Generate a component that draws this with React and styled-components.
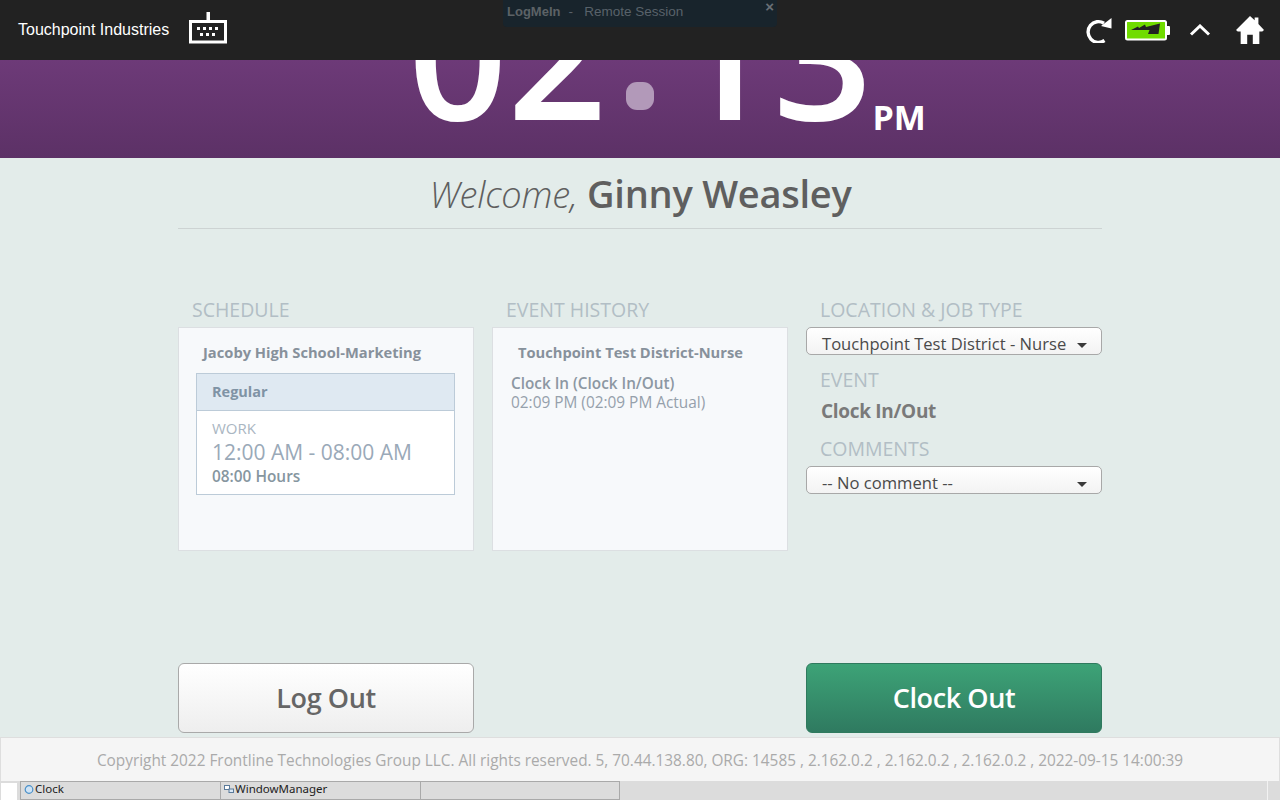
import React from 'react'
import styled, { createGlobalStyle } from 'styled-components'

const GlobalStyle = createGlobalStyle`
  html, body {
    margin: 0;
    padding: 0;
    height: 100%;
    overflow: hidden;
    background: #e3ecea;
  }
  * {
    box-sizing: border-box;
  }
`

const Page = styled.div`
  display: flex;
  flex-direction: column;
  width: 1280px;
  height: 800px;
  overflow: hidden;
  font-family: 'Open Sans', sans-serif;
`

const TopBar = styled.header`
  display: flex;
  align-items: center;
  justify-content: space-between;
  height: 60px;
  flex: none;
  padding: 0 16px 0 18px;
  background: #222222;
  position: relative;
  z-index: 2;
`

const BarLeft = styled.div`
  display: flex;
  align-items: center;
  gap: 20px;
`

const BarRight = styled.div`
  display: flex;
  align-items: center;
`

const Icon = styled.svg`
  display: block;
  flex: none;
  margin-right: ${(p) => p.$right || 0}px;
  margin-bottom: ${(p) => p.$lift || 0}px;
`

const CompanyName = styled.span`
  font-family: 'Liberation Sans', Arial, sans-serif;
  font-size: 16px;
  color: #ffffff;
`

const SessionNotice = styled.div`
  position: absolute;
  left: 503px;
  top: 0;
  width: 274px;
  height: 27px;
  padding: 4px 0 0 4px;
  background: #18242c;
  border-radius: 0 0 4px 4px;
  font-family: 'Liberation Sans', Arial, sans-serif;
  font-size: 13.5px;
  line-height: 15px;
  color: #58626a;
  white-space: nowrap;

  b {
    font-size: 13px;
    color: #5c6266;
    margin-right: 8px;
  }
`

const SessionClose = styled.span`
  position: absolute;
  right: 3px;
  top: 0;
  font-size: 15px;
  line-height: 14px;
  font-weight: bold;
  color: #6a7076;
`

const ClockBanner = styled.section`
  display: flex;
  justify-content: center;
  align-items: flex-end;
  height: 98px;
  flex: none;
  padding: 0 0 18px 54px;
  background: linear-gradient(#6d3a78, #5c3166);
  color: #ffffff;
`

const Digits = styled.span`
  font-size: 174px;
  font-weight: 600;
  line-height: 1;
`

const ColonDot = styled.span`
  display: block;
  width: 28px;
  height: 28px;
  margin: 0 19px 30px 19.4px;
  border-radius: 11px;
  background: #b299b9;
`

const Meridiem = styled.span`
  font-size: 34px;
  font-weight: 700;
  line-height: 34px;
  margin: 0 0 6px 0;
`

const Main = styled.main`
  flex: 1;
  display: flex;
  flex-direction: column;
  width: 924px;
  margin: 0 auto;
`

const Welcome = styled.h1`
  height: 71px;
  margin: 0;
  padding: 8px 0 0 1px;
  text-align: center;
  font-size: 38px;
  line-height: 54px;
  font-weight: 600;
  letter-spacing: -0.25px;
  color: #5f5f5f;
  border-bottom: 1px solid #cdd3d3;

  em {
    font-size: 36.2px;
    font-weight: 300;
    font-style: italic;
    letter-spacing: -0.2px;
  }
`

const Columns = styled.div`
  display: grid;
  grid-template-columns: repeat(3, 296px);
  column-gap: 18px;
  margin-top: 62px;
`

const SectionLabel = styled.div`
  display: flex;
  align-items: center;
  height: ${(p) => p.$height || 36}px;
  margin-top: ${(p) => p.$gap || 0}px;
  padding-left: 14px;
  font-size: 19.5px;
  color: #b2bec5;
`

const Card = styled.div`
  height: 224px;
  background: #f7f9fb;
  border: 1px solid #dcdfe2;
`

const CardTitle = styled.div`
  padding: 14px 0 0 ${(p) => p.$indent}px;
  font-size: 14.7px;
  line-height: 20px;
  font-weight: 700;
  color: #87919b;
`

const Shift = styled.div`
  width: 259px;
  margin: 11px 0 0 17px;
  background: #ffffff;
  border: 1px solid #bccbd8;
`

const ShiftHeader = styled.div`
  height: 37px;
  padding-left: 15px;
  background: #dfe9f2;
  border-bottom: 1px solid #bccbd8;
  font-size: 14.5px;
  line-height: 36px;
  font-weight: 700;
  color: #7f93a5;
`

const ShiftBody = styled.div`
  padding: 8px 15px 6px;
`

const ShiftKind = styled.div`
  font-size: 15px;
  line-height: 19px;
  color: #aab6c2;
`

const ShiftTime = styled.div`
  font-size: 21px;
  line-height: 28px;
  color: #9aa9b8;
`

const ShiftHours = styled.div`
  font-size: 15.4px;
  line-height: 22px;
  font-weight: 600;
  color: #86969f;
`

const HistoryItem = styled.div`
  padding: 12px 0 0 18px;
`

const HistoryName = styled.div`
  font-size: 15.3px;
  line-height: 18px;
  font-weight: 600;
  color: #8c97a2;
`

const HistoryTime = styled.div`
  font-size: 15.4px;
  line-height: 21px;
  color: #95a0ab;
`

const Dropdown = styled.div`
  display: flex;
  align-items: center;
  justify-content: space-between;
  height: 28px;
  padding: 5px 14px 0 15px;
  background: linear-gradient(#ffffff, #f3f3f3);
  border: 1px solid #a8a8a8;
  border-radius: 5px;
  font-size: 16.6px;
  color: #4a4a4a;
  white-space: nowrap;
`

const Caret = styled.span`
  width: 0;
  height: 0;
  margin-top: 3px;
  border-left: 5.5px solid transparent;
  border-right: 5.5px solid transparent;
  border-top: 5.5px solid #3a3a3a;
`

const EventName = styled.div`
  height: 39px;
  padding-left: 15px;
  font-size: 19px;
  line-height: 40px;
  font-weight: 700;
  letter-spacing: -0.3px;
  color: #7a7a7a;
`

const Actions = styled.div`
  display: flex;
  justify-content: space-between;
  margin-top: 112px;
`

const Action = styled.button`
  width: 296px;
  height: 70px;
  padding: 0 0 2px;
  border-radius: 6px;
  border: 1px solid ${(p) => (p.$primary ? '#2f7a5e' : '#a9a9a9')};
  background: ${(p) =>
    p.$primary
      ? 'linear-gradient(#3da377, #2f7a60)'
      : 'linear-gradient(#ffffff, #eeeeee)'};
  color: ${(p) => (p.$primary ? '#ffffff' : '#666666')};
  font-family: 'Open Sans', sans-serif;
  font-size: 27px;
  font-weight: 600;
  letter-spacing: -0.4px;
`

const Footer = styled.footer`
  flex: none;
  height: 44px;
  background: #f5f5f5;
  border: 1px solid #dedede;
  border-bottom: none;
  text-align: center;
  font-size: 15.37px;
  line-height: 45px;
  color: #aaaaaa;
  white-space: nowrap;
`

const TaskBar = styled.div`
  display: flex;
  flex: none;
  height: 19px;
  background: #dcdcdc;
  padding-left: 1px;
`

const StartBox = styled.span`
  width: 16px;
  height: 17px;
  margin: 2px 3px 0 0;
  background: #ffffff;
`

const Task = styled.div`
  display: flex;
  align-items: center;
  gap: 1px;
  width: 200px;
  padding: 0 0 3px 3px;
  border: 1px solid #a9a9a9;
  border-right: none;
  font-family: 'Noto Sans', sans-serif;
  font-size: 11.5px;
  line-height: 14px;
  color: #222222;

  &:last-of-type {
    border-right: 1px solid #a9a9a9;
  }
`

const TrayDivider = styled.span`
  width: 1px;
  margin-left: 647px;
  background: #f2f2f2;
`

const KeyboardIcon = () => (
  <Icon width="38" height="32" viewBox="0 0 38 32" $lift={4}>
    <rect x="17.500" y="0" width="3.500" height="9" fill="#fff" />
    <rect x="1.500" y="9.500" width="35" height="20.500" fill="none" stroke="#fff" strokeWidth="3" />
    <path
      fill="#fff"
      d="M8 15h3v3H8zM14 15h3v3h-3zM20 15h3v3h-3zM26 15h3v3h-3zM11 21h3v3h-3zM17 21h3v3h-3zM23 21h3v3h-3z"
    />
  </Icon>
)

const RefreshIcon = () => (
  <Icon width="27" height="26" viewBox="0 0 27 26" $right={11}>
    <path d="M18 6.200A10.400 10.400 0 1 0 18.500 23.500" fill="none" stroke="#fff" strokeWidth="3.400" />
    <path d="M25.500 1v10.500L15 9z" fill="#fff" />
  </Icon>
)

const BatteryIcon = () => (
  <Icon width="46" height="21" viewBox="0 0 46 21" $right={19}>
    <rect x="2" y="1" width="40" height="18.500" rx="1.500" fill="#70dc00" stroke="#fff" strokeWidth="2" />
    <path d="M43 6h2a1 1 0 0 1 1 1v7a1 1 0 0 1-1 1h-2z" fill="#fff" />
    <path fill="#222" d="M7 10L14 6.500L15 8L21 4.500L22 7L36 3.500L34.500 14H24L25.500 10z" />
  </Icon>
)

const ChevronIcon = () => (
  <Icon width="22" height="12" viewBox="0 0 22 12" $right={25}>
    <path d="M2 10.500L11 2l9 8.500" fill="none" stroke="#fff" strokeWidth="3" />
  </Icon>
)

const HomeIcon = () => (
  <Icon width="28" height="30" viewBox="0 0 30 30">
    <path
      fill="#fff"
      d="M15 0L20 4.500V1.500h4v7L30 15l-1.800 1.500H25V30H18V20h-6v10H5V16.500H1.800L0 15z"
    />
  </Icon>
)

const ClockGlyph = () => (
  <Icon width="10" height="11" viewBox="0 0 10 11">
    <circle cx="5" cy="5.500" r="3.800" fill="#cfe3f5" stroke="#4a90c8" strokeWidth="1.200" />
  </Icon>
)

const WindowGlyph = () => (
  <Icon width="10" height="11" viewBox="0 0 10 11">
    <rect x="0.500" y="1.500" width="5" height="4" fill="#fff" stroke="#5a7a9a" />
    <rect x="5" y="5" width="4.500" height="3.500" fill="#dbe8f5" stroke="#5a7a9a" />
  </Icon>
)

const App = () => (
  <Page>
    <GlobalStyle />
    <TopBar>
      <BarLeft>
        <CompanyName>Touchpoint Industries</CompanyName>
        <KeyboardIcon />
      </BarLeft>
      <BarRight>
        <RefreshIcon />
        <BatteryIcon />
        <ChevronIcon />
        <HomeIcon />
      </BarRight>
      <SessionNotice>
        <b>LogMeIn</b>-&nbsp;&nbsp; Remote Session
        <SessionClose>×</SessionClose>
      </SessionNotice>
    </TopBar>
    <ClockBanner>
      <Digits>02</Digits>
      <ColonDot />
      <Digits>13</Digits>
      <Meridiem>PM</Meridiem>
    </ClockBanner>
    <Main>
      <Welcome>
        <em>Welcome,</em> Ginny Weasley
      </Welcome>
      <Columns>
        <div>
          <SectionLabel>SCHEDULE</SectionLabel>
          <Card>
            <CardTitle $indent={24}>Jacoby High School-Marketing</CardTitle>
            <Shift>
              <ShiftHeader>Regular</ShiftHeader>
              <ShiftBody>
                <ShiftKind>WORK</ShiftKind>
                <ShiftTime>12:00 AM - 08:00 AM</ShiftTime>
                <ShiftHours>08:00 Hours</ShiftHours>
              </ShiftBody>
            </Shift>
          </Card>
        </div>
        <div>
          <SectionLabel>EVENT HISTORY</SectionLabel>
          <Card>
            <CardTitle $indent={25}>Touchpoint Test District-Nurse</CardTitle>
            <HistoryItem>
              <HistoryName>Clock In (Clock In/Out)</HistoryName>
              <HistoryTime>02:09 PM (02:09 PM Actual)</HistoryTime>
            </HistoryItem>
          </Card>
        </div>
        <div>
          <SectionLabel>LOCATION &amp; JOB TYPE</SectionLabel>
          <Dropdown>
            Touchpoint Test District - Nurse
            <Caret />
          </Dropdown>
          <SectionLabel $height={24} $gap={12}>EVENT</SectionLabel>
          <EventName>Clock In/Out</EventName>
          <SectionLabel>COMMENTS</SectionLabel>
          <Dropdown>
            -- No comment --
            <Caret />
          </Dropdown>
        </div>
      </Columns>
      <Actions>
        <Action>Log Out</Action>
        <Action $primary>Clock Out</Action>
      </Actions>
    </Main>
    <Footer>
      Copyright 2022 Frontline Technologies Group LLC. All rights reserved. 5, 70.44.138.80, ORG: 14585 , 2.162.0.2 , 2.162.0.2 , 2.162.0.2 , 2022-09-15 14:00:39
    </Footer>
    <TaskBar>
      <StartBox />
      <Task>
        <ClockGlyph />
        Clock
      </Task>
      <Task>
        <WindowGlyph />
        WindowManager
      </Task>
      <Task />
      <TrayDivider />
    </TaskBar>
  </Page>
)

export default App
